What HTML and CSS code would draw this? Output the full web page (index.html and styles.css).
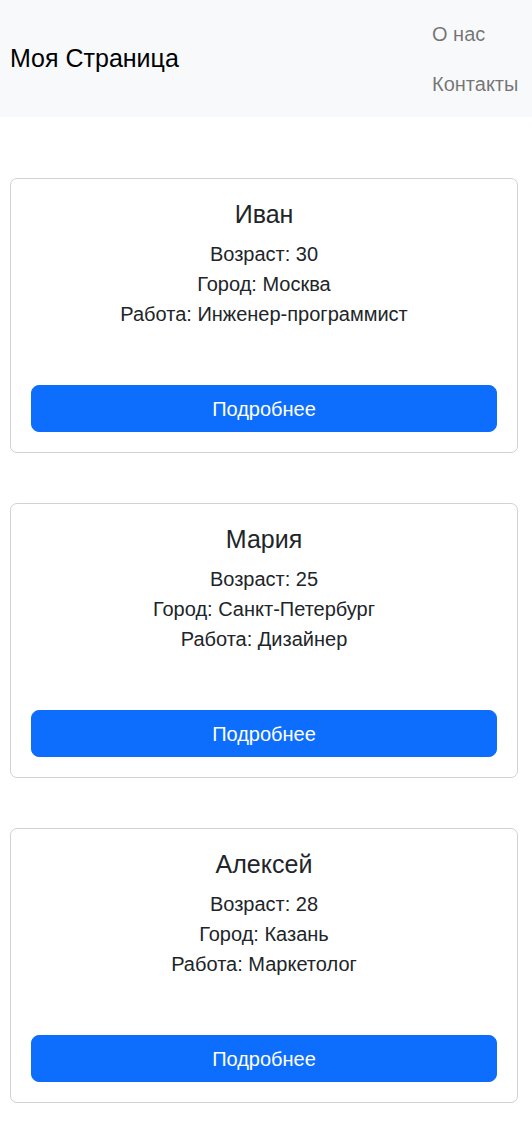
FILE: index.html
```html
<!DOCTYPE html>
<html lang="ru">
<head>
<meta charset="utf-8">
<title>Моя Страница</title>
<link rel="stylesheet" href="styles.css">
</head>
<body>
<nav class="navbar">
  <a class="brand" href="#">Моя Страница</a>
  <ul class="nav">
    <li><a class="nav-link" href="#">О нас</a></li>
    <li><a class="nav-link" href="#">Контакты</a></li>
  </ul>
</nav>
<main class="container">
  <div class="card">
    <h5 class="card-title">Иван</h5>
    <p class="card-text">Возраст: 30<br>Город: Москва<br>Работа: Инженер-программист</p>
    <a class="btn" href="#">Подробнее</a>
  </div>
  <div class="card">
    <h5 class="card-title">Мария</h5>
    <p class="card-text">Возраст: 25<br>Город: Санкт-Петербург<br>Работа: Дизайнер</p>
    <a class="btn" href="#">Подробнее</a>
  </div>
  <div class="card">
    <h5 class="card-title">Алексей</h5>
    <p class="card-text">Возраст: 28<br>Город: Казань<br>Работа: Маркетолог</p>
    <a class="btn" href="#">Подробнее</a>
  </div>
</main>
</body>
</html>
```
FILE: styles.css
```css
* { box-sizing: border-box; }
body {
  margin: 0;
  font-family: "Liberation Sans", Arial, sans-serif;
  font-size: 20px;
  line-height: 1.5;
  color: #212529;
  background: #fff;
}
a { text-decoration: none; }
.navbar {
  background: #f8f9fa;
  height: 117px;
  display: flex;
  align-items: center;
  justify-content: space-between;
  padding: 0 10px;
}
.brand {
  color: #000;
  font-size: 25px;
  line-height: 1.5;
}
.nav {
  list-style: none;
  margin: 0;
  padding: 0;
  width: 90px;
  display: flex;
  flex-direction: column;
}
.nav-link {
  display: block;
  color: rgba(0,0,0,.55);
  padding: 10px 0;
  line-height: 30px;
}
.container {
  padding: 61px 15px 31px 10px;
  display: flex;
  flex-direction: column;
  gap: 50px;
}
.card {
  border: 1px solid rgba(0,0,0,.175);
  border-radius: 7px;
  padding: 20px 20px;
  height: 275px;
  width: 508px;
  text-align: center;
  display: flex;
  flex-direction: column;
}
.card-title {
  margin: 0 0 10px;
  font-size: 25px;
  font-weight: 400;
  line-height: 1.2;
}
.card-text {
  margin: 0;
  line-height: 30px;
}
.btn {
  margin-top: auto;
  display: block;
  background: #0d6efd;
  color: #fff;
  border: 1px solid #0d6efd;
  border-radius: 8px;
  padding: 7.5px 12px;
  line-height: 30px;
}
```
